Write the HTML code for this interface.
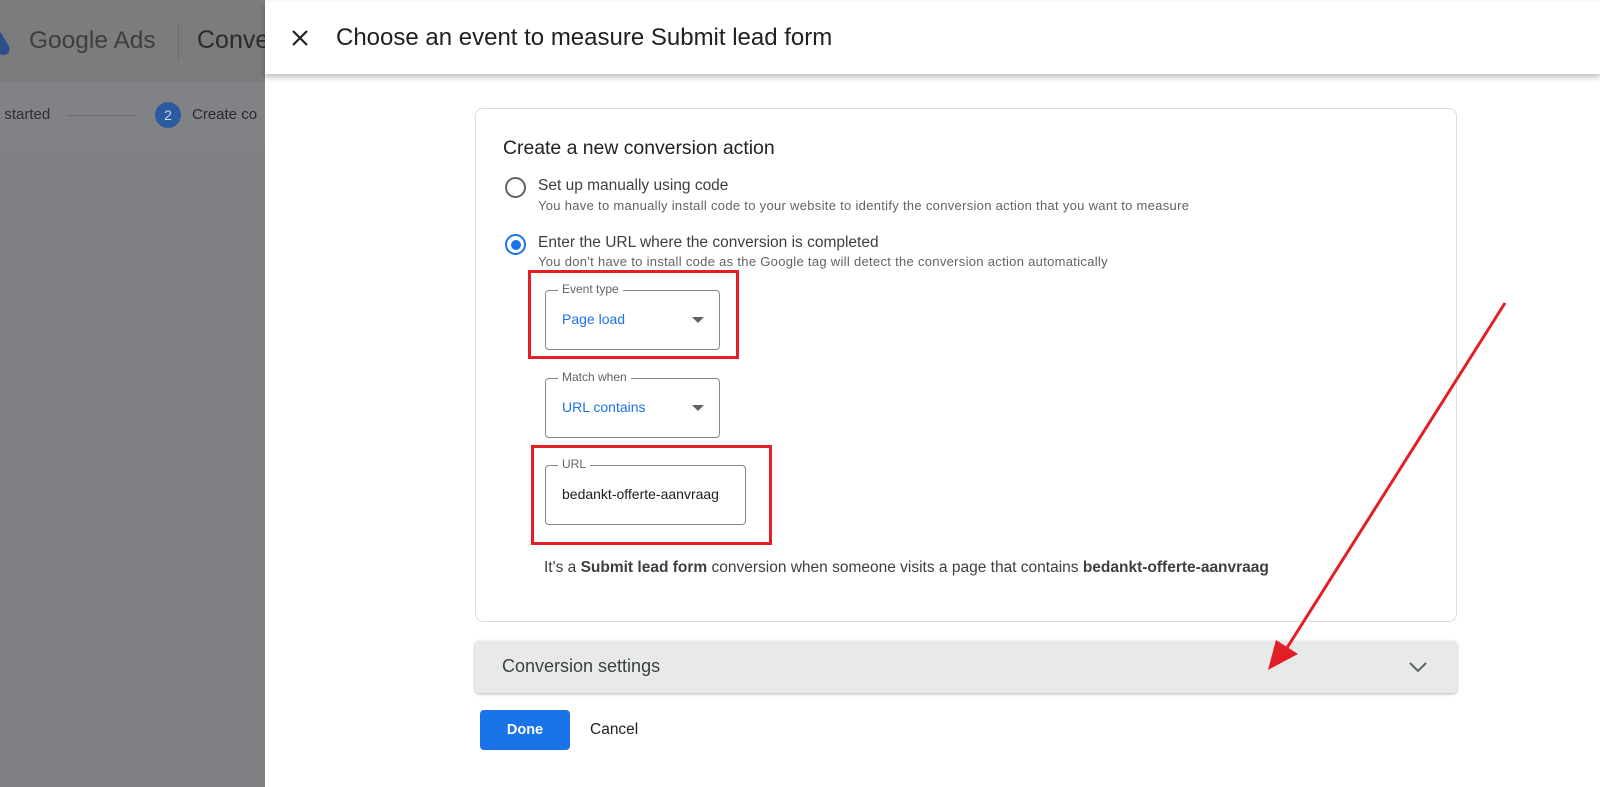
<!DOCTYPE html>
<html><head><meta charset="utf-8"><style>
*{box-sizing:border-box;margin:0;padding:0}
body{width:1600px;height:787px;overflow:hidden;position:relative;font-family:"Liberation Sans",Arial,sans-serif;background:#fff}
.abs{position:absolute}
.ov{left:0;top:0;width:265px;height:787px;background:#808184}
.ovh{left:0;top:0;width:265px;height:82px;background:#7b7c7e}
.ovs{left:0;top:82px;width:265px;height:66px;background:#818285}
.panel{left:265px;top:0;width:1335px;height:787px;background:#fff}
.hdr{left:265px;top:2px;width:1335px;height:72px;background:#fff;box-shadow:0 3px 6px rgba(0,0,0,.28)}
.card{left:475px;top:108px;width:982px;height:514px;border:1px solid #dadce0;border-radius:8px}
.field{border:1px solid #80868b;border-radius:4px;position:absolute}
.field .lab{position:absolute;top:-9px;left:12px;background:#fff;padding:0 4px;font-size:12px;color:#5f6368}
.field .val{position:absolute;left:16px;top:20px;font-size:14px;color:#1a73e8}
.caret{position:absolute;right:15px;top:26px;width:0;height:0;border-left:6px solid transparent;border-right:6px solid transparent;border-top:6px solid #5f6368}
.red{position:absolute;border:3px solid #e41e26}
.t1{font-size:15.5px;color:#3c4043}
.t2{font-size:13px;letter-spacing:.3px;color:#5f6368}
</style></head><body>
<div class="abs" style="left:0;top:0;width:1600px;height:2px;background:#4b3848"></div>
<div class="abs ov"></div><div class="abs ovh"></div><div class="abs ovs"></div>
<div class="abs" style="left:-6px;top:30px;width:12px;height:26px;background:#2b4f86;border-radius:6px;transform:rotate(-30deg)"></div>
<div class="abs" style="left:29px;top:27px;font-size:24.5px;color:#3d3e40">Google Ads</div>
<div class="abs" style="left:178px;top:24px;width:1px;height:36px;background:#6b6c6e"></div>
<div class="abs" style="left:197px;top:26px;font-size:25px;color:#2a2a2c">Conve</div>
<div class="abs" style="left:-4px;top:106px;font-size:15px;color:#2f3032">t started</div>
<div class="abs" style="left:68px;top:115px;width:68px;height:1px;background:#6b6c6e"></div>
<div class="abs" style="left:155px;top:102px;width:26px;height:26px;border-radius:50%;background:#2b5aa0;color:#c9d6ea;font-size:14px;text-align:center;line-height:26px">2</div>
<div class="abs" style="left:192px;top:106px;font-size:15px;color:#2a2a2c">Create co</div>
<div class="abs panel"></div>
<div class="abs hdr"></div>
<svg class="abs" style="left:291px;top:29px" width="18" height="18" viewBox="0 0 18 18"><path d="M2 2L16 16M16 2L2 16" stroke="#202124" stroke-width="2.2"/></svg>
<div class="abs" style="left:336px;top:24px;font-size:24px;color:#202124">Choose an event to measure Submit lead form</div>
<div class="abs card"></div>
<div class="abs" style="left:503px;top:137px;font-size:19.4px;color:#202124">Create a new conversion action</div>
<div class="abs" style="left:505px;top:177px;width:21px;height:21px;border:2px solid #5f6368;border-radius:50%"></div>
<div class="abs t1" style="left:538px;top:177px">Set up manually using code</div>
<div class="abs t2" style="left:538px;top:198px">You have to manually install code to your website to identify the conversion action that you want to measure</div>
<div class="abs" style="left:505px;top:234px;width:21px;height:21px;border:2px solid #1a73e8;border-radius:50%"><div style="margin:3.5px;width:10px;height:10px;border-radius:50%;background:#1a73e8"></div></div>
<div class="abs t1" style="left:538px;top:234px">Enter the URL where the conversion is completed</div>
<div class="abs t2" style="left:538px;top:254px">You don't have to install code as the Google tag will detect the conversion action automatically</div>
<div class="red" style="left:528px;top:270px;width:211px;height:89px"></div>
<div class="field" style="left:545px;top:290px;width:175px;height:60px"><span class="lab">Event type</span><span class="val">Page load</span><span class="caret"></span></div>
<div class="field" style="left:545px;top:378px;width:175px;height:60px"><span class="lab">Match when</span><span class="val">URL contains</span><span class="caret"></span></div>
<div class="red" style="left:531px;top:445px;width:241px;height:100px"></div>
<div class="field" style="left:545px;top:465px;width:201px;height:60px"><span class="lab">URL</span><span class="val" style="color:#202124">bedankt-offerte-aanvraag</span></div>
<div class="abs" style="left:544px;top:559px;font-size:15.5px;color:#3c4043">It's a <b>Submit lead form</b> conversion when someone visits a page that contains <b>bedankt-offerte-aanvraag</b></div>
<div class="abs" style="left:475px;top:641px;width:982px;height:52px;background:#e8e9e9;border-radius:4px;box-shadow:0 1px 3px rgba(0,0,0,.3)"></div>
<div class="abs" style="left:502px;top:656px;font-size:18px;color:#3c4043">Conversion settings</div>
<svg class="abs" style="left:1408px;top:660px" width="20" height="14" viewBox="0 0 20 14"><path d="M2 3L10 11L18 3" stroke="#5f6368" stroke-width="2" fill="none"/></svg>
<div class="abs" style="left:480px;top:710px;width:90px;height:40px;background:#1a73e8;border-radius:4px;color:#fff;font-weight:bold;font-size:14.5px;text-align:center;line-height:40px">Done</div>
<div class="abs" style="left:590px;top:721px;font-size:15.5px;color:#202124">Cancel</div>
<svg class="abs" style="left:0;top:0" width="1600" height="787"><line x1="1505" y1="303" x2="1285" y2="651" stroke="#e41e26" stroke-width="3"/><polygon points="1268,670 1276,640 1298,654" fill="#e41e26"/></svg>
</body></html>
